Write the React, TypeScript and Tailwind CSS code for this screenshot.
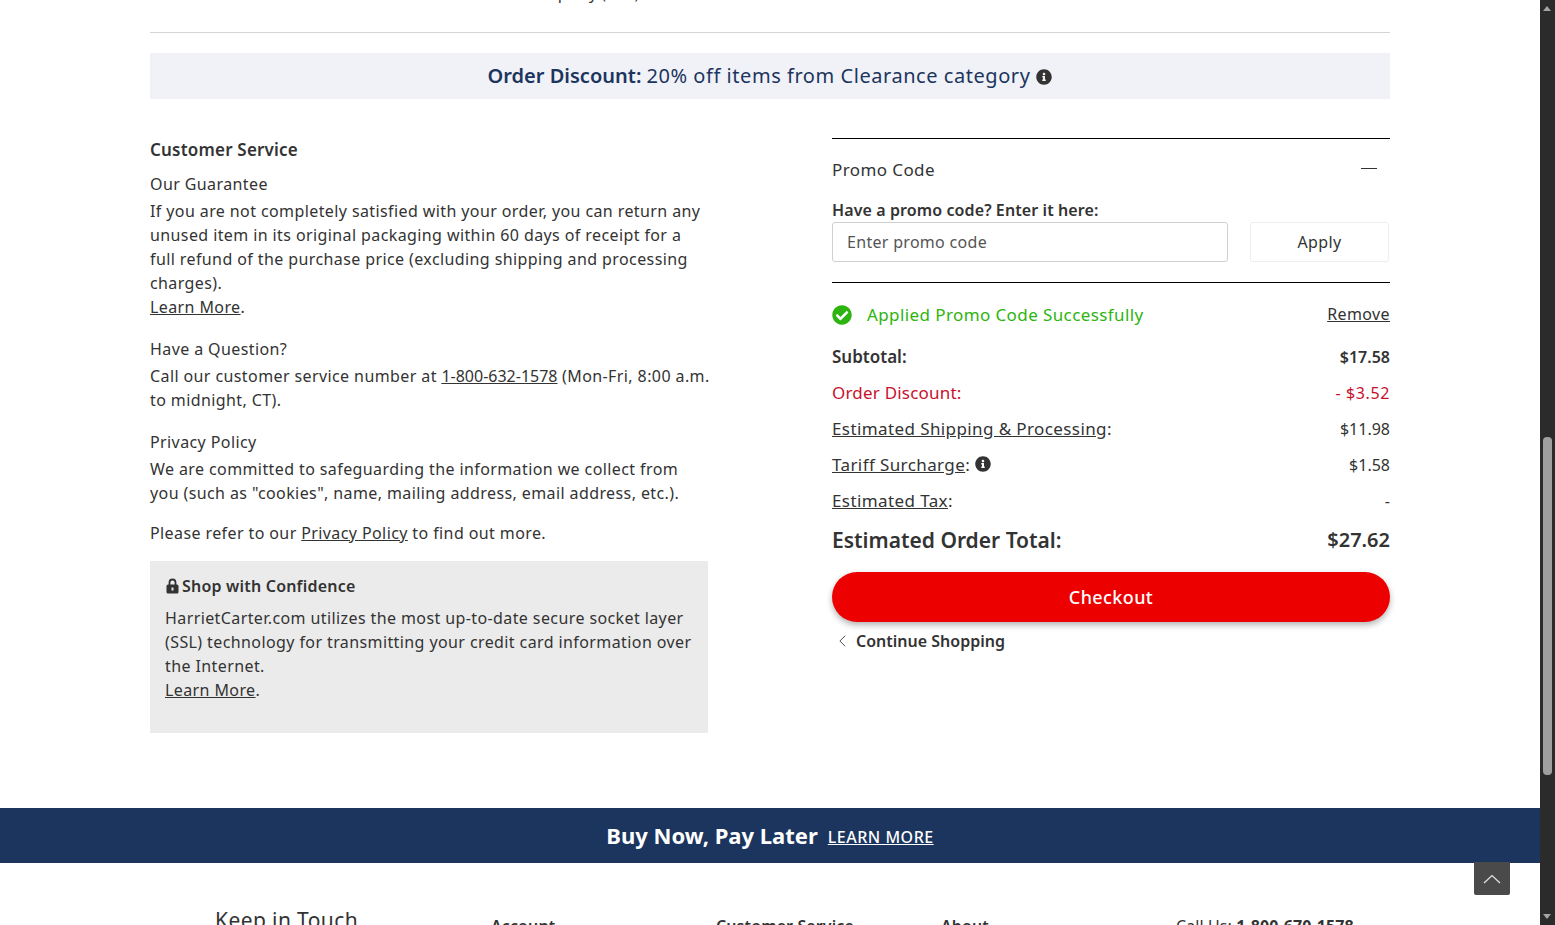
import { FaCheckCircle, FaInfoCircle } from 'react-icons/fa';

const SUMMARY = [
  { label: 'Estimated Shipping & Processing', value: '$11.98' },
  { label: 'Tariff Surcharge', value: '$1.58', info: true },
  { label: 'Estimated Tax', value: '-' },
];

export default function App() {
  return (
    <div className="h-screen overflow-hidden flex bg-white text-[#333] font-['Noto_Sans',sans-serif] text-[16px] leading-6 tracking-[0.4px]">
      <div className="flex-1 min-w-0 overflow-hidden relative">
        <div className="h-[33px] mx-[150px] border-b border-[#d4d4d4] overflow-hidden">
          <div className="-mt-[19px] ml-[385px] text-[16px] tracking-normal">Ships by (M-F)</div>
        </div>

        <div className="mx-[150px] mt-5 h-[46px] bg-[#f1f2f7] flex items-center justify-center text-[20px] text-[#1c355e]">
          <span className="font-semibold tracking-normal">Order Discount:</span>
          <span className="ml-[5px] tracking-[0.55px]">20% off items from Clearance category</span>
          <FaInfoCircle className="ml-[6px] text-[#333] text-[16px] mt-[2px]" />
        </div>

        <div className="mx-[150px] mt-[39px] flex justify-between">
          <div className="w-[558px] -mt-px">
            <h2 className="font-semibold text-[17px] leading-6 pt-px tracking-[0.2px]">Customer Service</h2>
            <p className="mt-[10px]">Our Guarantee</p>
            <p className="mt-[3px]">
              If you are not completely satisfied with your order, you can return any unused item in its original packaging within 60 days of receipt for a full refund of the purchase price (excluding shipping and processing charges).
              <br />
              <a className="underline">Learn More</a>.
            </p>
            <p className="mt-[18px]">Have a Question?</p>
            <p className="mt-[3px] whitespace-nowrap">
              Call our customer service number at <a className="underline tracking-normal">1-800-632-1578</a> (Mon-Fri, 8:00 a.m.
              <br />
              to midnight, CT).
            </p>
            <p className="mt-[18px]">Privacy Policy</p>
            <p className="mt-[3px]">
              We are committed to safeguarding the information we collect from you (such as "cookies", name, mailing address, email address, etc.).
            </p>
            <p className="mt-4">
              Please refer to our <a className="underline">Privacy Policy</a> to find out more.
            </p>
            <div className="mt-4 h-[172px] bg-[#ebebeb] px-[15px] pt-[13px]">
              <h3 className="font-semibold flex items-center tracking-[0.2px]">
                <svg viewBox="0 0 13 16" className="w-[13px] h-4 mr-[3px] ml-px" fill="#333">
                  <path d="M3.500 7V4.500a3 3 0 0 1 6 0V7" fill="none" stroke="#333" strokeWidth="1.800" />
                  <path fillRule="evenodd" d="M2 6.500h9a1.500 1.500 0 0 1 1.500 1.500v6a1.500 1.500 0 0 1-1.500 1.500H2A1.500 1.500 0 0 1 .5 14V8A1.500 1.500 0 0 1 2 6.500Zm3.500 3v3h2v-3h-2Z" />
                </svg>
                Shop with Confidence
              </h3>
              <p className="mt-[8px]">
                HarrietCarter.com utilizes the most up-to-date secure socket layer (SSL) technology for transmitting your credit card information over the Internet.
                <br />
                <a className="underline">Learn More</a>.
              </p>
            </div>
          </div>

          <div className="w-[558px]">
            <div className="border-t border-b border-black h-[145px] pt-[19px]">
              <div className="flex justify-between items-center pr-[13px]">
                <span className="text-[17px]">Promo Code</span>
                <span className="w-[16px] h-px bg-[#333] -mt-[3px]" />
              </div>
              <label className="block font-semibold mt-[18px] leading-5 tracking-[0.1px]">Have a promo code? Enter it here:</label>
              <div className="flex justify-between mt-[2px] pr-px">
                <input
                  placeholder="Enter promo code"
                  className="w-[396px] h-10 border border-[#d0d0d0] rounded-[3px] px-[14px] tracking-[0.3px] placeholder:text-[#555] outline-none"
                />
                <button className="w-[139px] h-10 border border-[#eeeeee] rounded-[3px] text-[#333]">Apply</button>
              </div>
            </div>

            <div className="flex justify-between items-center mt-5">
              <div className="flex items-center text-[#2db40f] text-[17px]">
                <FaCheckCircle className="text-[20px] mr-[15px]" />
                Applied Promo Code Successfully
              </div>
              <a className="underline -mt-[2px]">Remove</a>
            </div>

            <div className="flex justify-between mt-[18px] font-semibold h-6 text-[17px] tracking-normal">
              <span>Subtotal:</span>
              <span className="text-[16px]">$17.58</span>
            </div>
            <div className="flex justify-between mt-3 text-[#c8102e] h-6 text-[17px] tracking-[0.2px]">
              <span>Order Discount:</span>
              <span className="text-[16px] tracking-[0.6px]">- $3.52</span>
            </div>
            {SUMMARY.map((row) => (
              <div key={row.label} className="flex justify-between mt-3 h-6 text-[17px]">
                <span className="flex items-center">
                  <span><a className="underline">{row.label}</a>:</span>
                  {row.info && <FaInfoCircle className="ml-[5px] text-[16px] -mt-[2px]" />}
                </span>
                <span className="text-[16px] tracking-normal">{row.value}</span>
              </div>
            ))}
            <div className="flex justify-between mt-3 font-semibold text-[21px] h-[30px] leading-[30px] tracking-normal">
              <span>Estimated Order Total:</span>
              <span className="text-[20px]">$27.62</span>
            </div>
            <button className="mt-[17px] w-full h-[50px] pb-px rounded-full bg-[#ec0000] text-white text-[18px] font-medium shadow-[0_3px_6px_rgba(0,0,0,0.3)]">Checkout</button>
            <div className="flex items-center mt-[7px] font-semibold tracking-normal">
              <svg viewBox="0 0 10 16" className="w-[9px] h-[14px] ml-[6px] mr-[9px]" fill="none" stroke="#333" strokeWidth="1"><path d="M8 2 2 8l6 6" /></svg>
              Continue Shopping
            </div>
          </div>
        </div>

        <div className="mt-[75px] h-[55px] bg-[#1c355e] text-white flex items-center justify-center">
          <span className="font-bold text-[22px] tracking-normal -mt-[2px]">Buy Now, Pay Later</span>
          <a className="underline ml-[10px] text-[16px] mt-[2px] font-medium tracking-[0.5px]">LEARN MORE</a>
        </div>

        <div className="relative h-[100px] pl-[215px] pt-[45px] flex">
          <span className="text-[21px] w-[276px]">Keep in Touch</span>
          <span className="font-semibold w-[225px] pt-[6px] tracking-[0.1px]">Account</span>
          <span className="font-semibold w-[225px] pt-[6px] tracking-[0.1px]">Customer Service</span>
          <span className="font-semibold w-[235px] pt-[6px] tracking-[0.1px]">About</span>
          <span className="pt-[6px] tracking-[0.1px]">Call Us: <b>1-800-670-1578</b></span>
        </div>

        <button className="absolute left-[1474px] top-[862px] w-9 h-[33px] bg-[#4a4a4a] rounded-b-[2px] flex items-center justify-center">
          <svg viewBox="0 0 18 10" className="w-[18px] h-[10px]" fill="none" stroke="#e5e5e5" strokeWidth="1.2"><path d="M1 9 9 1.500l8 7.500" /></svg>
        </button>
      </div>

      <div className="w-[15px] shrink-0 bg-[#2b2b2b] relative">
        <div className="absolute top-[6px] left-[3px] border-x-[4.500px] border-x-transparent border-b-[5px] border-b-[#a5a5a5]" />
        <div className="absolute top-[437px] left-[3px] w-[9px] h-[338px] rounded-[4px] bg-[#9f9f9f]" />
        <div className="absolute bottom-[6px] left-[3px] border-x-[4.500px] border-x-transparent border-t-[5px] border-t-[#a5a5a5]" />
      </div>
    </div>
  );
}
